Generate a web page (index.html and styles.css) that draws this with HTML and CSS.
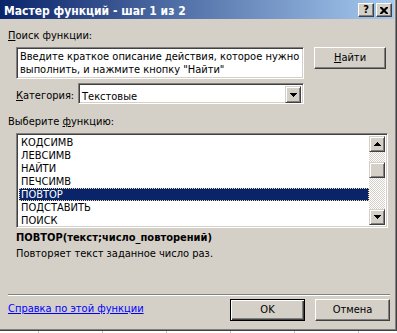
FILE: index.html
```html
<!DOCTYPE html>
<html lang="ru">
<head>
    <meta charset="UTF-8">
    <title>Мастер функций</title>
    <link rel="stylesheet" href="styles.css">
</head>
<body>
    <div class="dialog">
        <div class="frame">
            <div class="titlebar">
                <span class="title">Мастер функций - шаг 1 из 2</span>
                <div class="caption-btns">
                    <span class="cbtn help">?</span>
                    <span class="cbtn close">
                        <svg width="8" height="7" viewBox="0 0 8 7"><path d="M0 0h2l2 2 2-2h2v1l-2.5 2.5 2.5 2.5v1h-2l-2-2-2 2h-2v-1l2.5-2.5-2.5-2.5z"/></svg>
                    </span>
                </div>
            </div>
            <div class="content">
                <div class="lbl lbl-search"><u>П</u>оиск функции:</div>
                <div class="search-row">
                    <div class="sunken search">Введите краткое описание действия, которое нужно выполнить, и нажмите кнопку "Найти"</div>
                    <div class="btn find"><u>Н</u>айти</div>
                </div>
                <div class="cat-row">
                    <span class="lbl cat-lbl"><u>К</u>атегория:</span>
                    <div class="sunken combo">
                        <span class="combo-text">Текстовые</span>
                        <span class="raised dd-btn">
                            <svg width="7" height="4" viewBox="0 0 7 4"><path d="M0 0h7v1h-1v1h-1v1h-1v1h-1v-1h-1v-1h-1v-1h-1z"/></svg>
                        </span>
                    </div>
                </div>
                <div class="lbl lbl-func">Выберите <u>ф</u>ункцию:</div>
                <div class="sunken list">
                    <ul class="items">
                        <li>КОДСИМВ</li>
                        <li>ЛЕВСИМВ</li>
                        <li>НАЙТИ</li>
                        <li>ПЕЧСИМВ</li>
                        <li class="selected">ПОВТОР</li>
                        <li>ПОДСТАВИТЬ</li>
                        <li>ПОИСК</li>
                    </ul>
                    <div class="scrollbar">
                        <span class="raised sb-btn">
                            <svg width="7" height="4" viewBox="0 0 7 4"><path d="M3 0h1v1h1v1h1v1h1v1h-7v-1h1v-1h1v-1h1z"/></svg>
                        </span>
                        <span class="sb-gap-top"></span>
                        <span class="raised sb-thumb"></span>
                        <span class="sb-gap"></span>
                        <span class="raised sb-btn">
                            <svg width="7" height="4" viewBox="0 0 7 4"><path d="M0 0h7v1h-1v1h-1v1h-1v1h-1v-1h-1v-1h-1v-1h-1z"/></svg>
                        </span>
                    </div>
                </div>
                <div class="syntax">ПОВТОР(текст;число_повторений)</div>
                <div class="desc">Повторяет текст заданное число раз.</div>
                <div class="sep"></div>
                <div class="footer">
                    <a class="help-link" href="#">Справка по этой функции</a>
                    <div class="btn default ok">OK</div>
                    <div class="btn cancel">Отмена</div>
                </div>
            </div>
        </div>
    </div>
    <div class="sheet"></div>
</body>
</html>
```

FILE: styles.css
```css
html,body{
    margin:0;
    padding:0;
}
body{
    background:#fff;
    font:11px "DejaVu Sans Condensed", "Liberation Sans", Tahoma, sans-serif;
    color:#000;
}
.dialog{
    width:397px;
    height:331px;
    box-sizing:border-box;
    background:#d4d0c8;
    border-right:1px solid #404040;
    border-bottom:1px solid #404040;
}
.frame{
    height:100%;
    box-sizing:border-box;
    border-right:1px solid #808080;
    border-bottom:1px solid #808080;
    padding-right:1px;
    display:flex;
    flex-direction:column;
}
/* заголовок окна */
.titlebar{
    height:19px;
    flex:none;
    display:flex;
    justify-content:space-between;
    align-items:flex-start;
    background:linear-gradient(to right,#0a246a,#a6caf0);
}
.title{
    margin:5px 0 0 4px;
    font-size:12px;
    line-height:13px;
    color:#fff;
    font-weight:bold;
}
.caption-btns{
    display:flex;
    margin:3px 2px 0 0;
}
.cbtn{
    width:16px;
    height:14px;
    box-sizing:border-box;
    background:#d4d0c8;
    border:1px solid;
    border-color:#fff #404040 #404040 #fff;
    box-shadow:inset -1px -1px #808080;
    display:flex;
    align-items:center;
    justify-content:center;
}
.help{
    font-weight:bold;
    font-size:11px;
    line-height:12px;
}
.close{
    margin-left:2px;
}
.close svg{
    display:block;
}

.content{
    flex:1;
    padding:0 4px 0 8px;
}
.lbl{
    line-height:13px;
}
u{
    text-decoration:underline;
}
.lbl-search{
    margin-top:10px;
}

/* вдавленные поля */
.sunken{
    box-sizing:border-box;
    background:#fff;
    border:1px solid;
    border-color:#808080 #fff #fff #808080;
    box-shadow:inset 1px 1px #404040, inset -1px -1px #d4d0c8;
}
.raised{
    box-sizing:border-box;
    background:#d4d0c8;
    border:1px solid;
    border-color:#d4d0c8 #404040 #404040 #d4d0c8;
    box-shadow:inset 1px 1px #fff, inset -1px -1px #808080;
    display:flex;
    align-items:center;
    justify-content:center;
}
.raised svg{
    display:block;
}
.btn{
    box-sizing:border-box;
    height:22px;
    line-height:20px;
    text-align:center;
    background:#d4d0c8;
    border:1px solid;
    border-color:#fff #404040 #404040 #fff;
    box-shadow:inset -1px -1px #808080;
}
.btn.default{
    border-color:#000;
    box-shadow:inset 1px 1px #fff, inset -1px -1px #404040, inset -2px -2px #808080;
}

.search-row{
    display:flex;
    margin:5px 0 0 8px;
}
.search{
    width:288px;
    height:32px;
    padding:2px 3px;
    line-height:13px;
}
.find{
    width:72px;
    margin-left:10px;
}

.cat-row{
    display:flex;
    margin:4px 0 0 8px;
}
.cat-lbl{
    width:62px;
    padding-top:6px;
}
.combo{
    width:226px;
    height:21px;
    padding:2px;
    display:flex;
    justify-content:space-between;
}
.combo-text{
    padding:4px 0 0 1px;
    line-height:13px;
}
.dd-btn{
    width:16px;
    height:17px;
}

.lbl-func{
    margin-top:11px;
}
.list{
    margin:5px 0 0 8px;
    width:372px;
    height:95px;
    padding:2px;
    display:flex;
}
.items{
    list-style:none;
    margin:0;
    padding:0;
    flex:1;
}
.items li{
    height:13px;
    line-height:13px;
    padding-left:2px;
}
.items li.selected{
    background:#0a246a;
    color:#fff;
    outline:1px dotted #f5db95;
    outline-offset:-1px;
}
.scrollbar{
    width:16px;
    display:flex;
    flex-direction:column;
    background:repeating-conic-gradient(#d4d0c8 0 25%, #fff 0 50%) 0 0/2px 2px;
}
.sb-btn,.sb-thumb{
    height:16px;
    flex:none;
}
.sb-gap-top{
    height:10px;
}
.sb-gap{
    flex:1;
}

.syntax{
    margin:3px 0 0 8px;
    line-height:13px;
    font-weight:bold;
}
.desc{
    margin:3px 0 0 8px;
    line-height:13px;
}
.sep{
    margin-top:34px;
    border-top:1px solid #808080;
    border-bottom:1px solid #fff;
}
.footer{
    display:flex;
    margin-top:3px;
}
.help-link{
    margin-top:3px;
    line-height:13px;
    color:#00f;
    text-decoration:underline;
}
.ok{
    width:75px;
    margin-left:auto;
}
.cancel{
    width:75px;
    margin-left:10px;
}

/* лист под окном */
.sheet{
    height:2px;
    background:repeating-linear-gradient(to right, transparent 0 38px, #c0c0c0 38px 39px, transparent 39px 64px);
}
```
